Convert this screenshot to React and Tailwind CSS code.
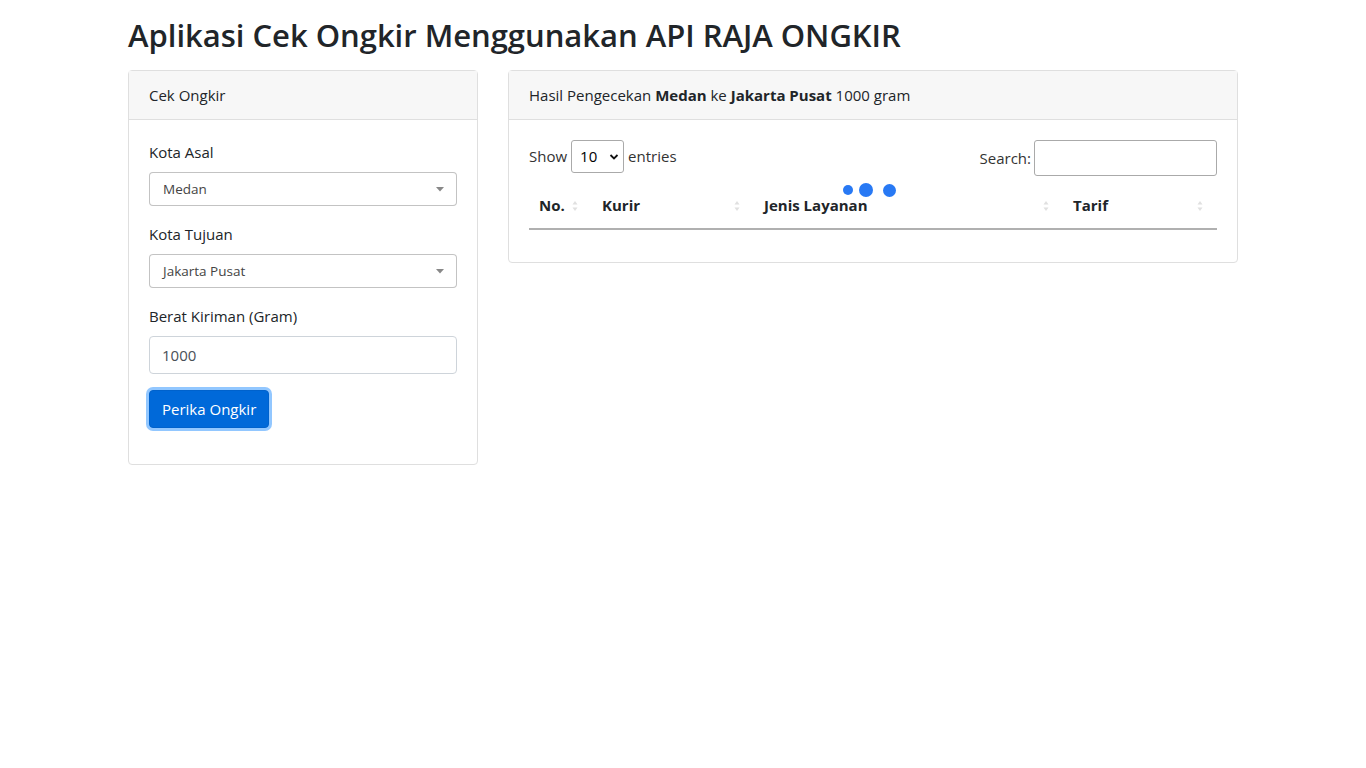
import React from "react";

function SortIcon() {
  return (
    <svg width="6" height="12" viewBox="0 0 6 12" className="shrink-0">
      <path d="M3 1 L5.5 4.5 L0.5 4.5 Z" fill="#e0e0e0" />
      <path d="M3 11 L5.5 7.5 L0.5 7.5 Z" fill="#e0e0e0" />
    </svg>
  );
}

function Select2({ value }) {
  return (
    <div className="flex h-[34px] items-center justify-between rounded-[4px] border border-[#aaa]/70 bg-white pl-[13px] pr-[12px]">
      <span className="text-[13.5px] text-[#444]">{value}</span>
      <svg width="8" height="5" viewBox="0 0 8 5">
        <path d="M0 0 L8 0 L4 4.5 Z" fill="#888" />
      </svg>
    </div>
  );
}

export default function App() {
  return (
    <div
      className="min-h-screen bg-white text-[#212529]"
      style={{ fontFamily: '"Open Sans", "Noto Sans", sans-serif' }}
    >
      <div className="mx-auto w-[1140px] px-[15px] pt-[17px]">
        <h2 className="mb-[16px] text-[31px] font-semibold leading-[1.2] tracking-[-0.02px] text-[#212529]">
          Aplikasi Cek Ongkir Menggunakan API RAJA ONGKIR
        </h2>
        <div className="flex items-start gap-[30px]">
          {/* Left card */}
          <div className="w-[350px] rounded-[4px] border border-[#dfdfdf]">
            <div className="border-b border-[#dfdfdf] bg-[#f7f7f7] px-[20px] py-[12px] text-[15px] leading-[24px]">
              Cek Ongkir
            </div>
            <div className="p-[20px]">
              <div className="mb-[16px]">
                <div className="mb-[8px] text-[15px] leading-[24px]">Kota Asal</div>
                <Select2 value="Medan" />
              </div>
              <div className="mb-[16px]">
                <div className="mb-[8px] text-[15px] leading-[24px]">Kota Tujuan</div>
                <Select2 value="Jakarta Pusat" />
              </div>
              <div className="mb-[16px]">
                <div className="mb-[8px] text-[15px] leading-[24px]">Berat Kiriman (Gram)</div>
                <div className="flex h-[38px] items-center rounded-[4px] border border-[#ced4da] px-[12px] text-[15px] text-[#495057]">
                  1000
                </div>
              </div>
              <div className="mb-[16px]">
                <button className="h-[38px] rounded-[4px] border border-[#0062cc] bg-[#0069d9] px-[12px] text-[15px] text-white shadow-[0_0_0_3px_rgba(38,143,255,0.5)]">
                  Perika Ongkir
                </button>
              </div>
            </div>
          </div>

          {/* Right card */}
          <div className="w-[730px] rounded-[4px] border border-[#dfdfdf]">
            <div className="border-b border-[#dfdfdf] bg-[#f7f7f7] px-[20px] py-[12px] text-[15px] leading-[24px]">
              Hasil Pengecekan <b className="font-bold">Medan</b> ke{" "}
              <b className="font-bold">Jakarta Pusat</b> 1000 gram
            </div>
            <div className="px-[20px] pb-[32px] pt-[20px]">
              <div className="flex h-[36px] items-start justify-between text-[15px] text-[#333]">
                <div className="flex h-[33px] items-center gap-[4px]">
                  <span>Show</span>
                  <div className="flex h-[33px] w-[53px] items-center justify-between rounded-[3px] border border-[#aaa] pl-[8px] pr-[4px]">
                    <span className="text-[15px] text-black">10</span>
                    <svg width="10" height="8" viewBox="0 0 10 8">
                      <path d="M1.5 2 L5 5.5 L8.5 2" stroke="#111" strokeWidth="1.8" fill="none" />
                    </svg>
                  </div>
                  <span>entries</span>
                </div>
                <div className="flex h-[36px] items-center gap-[3px]">
                  <span>Search:</span>
                  <div className="h-[36px] w-[183px] rounded-[3px] border border-[#aaa]" />
                </div>
              </div>
              <div className="relative mt-[7px]">
                <div className="absolute left-[314px] top-[0px] flex items-center">
                  <span className="h-[10px] w-[10px] rounded-full bg-[#2879f4]" />
                  <span className="ml-[6px] h-[14px] w-[14px] rounded-full bg-[#2879f4]" />
                  <span className="ml-[10px] h-[13px] w-[13px] rounded-full bg-[#2879f4]" />
                </div>
                <div className="flex h-[47px] items-center border-b-2 border-[#b0b0b0] text-[15px] font-bold text-[#212529]">
                  <div className="flex w-[63px] items-center justify-between pl-[10px] pr-[14px]">
                    <span>No.</span>
                    <SortIcon />
                  </div>
                  <div className="flex w-[162px] items-center justify-between pl-[10px] pr-[14px]">
                    <span>Kurir</span>
                    <SortIcon />
                  </div>
                  <div className="flex w-[309px] items-center justify-between pl-[10px] pr-[14px]">
                    <span>Jenis Layanan</span>
                    <SortIcon />
                  </div>
                  <div className="flex w-[154px] items-center justify-between pl-[10px] pr-[14px]">
                    <span>Tarif</span>
                    <SortIcon />
                  </div>
                </div>
              </div>
            </div>
          </div>
        </div>
      </div>
    </div>
  );
}
